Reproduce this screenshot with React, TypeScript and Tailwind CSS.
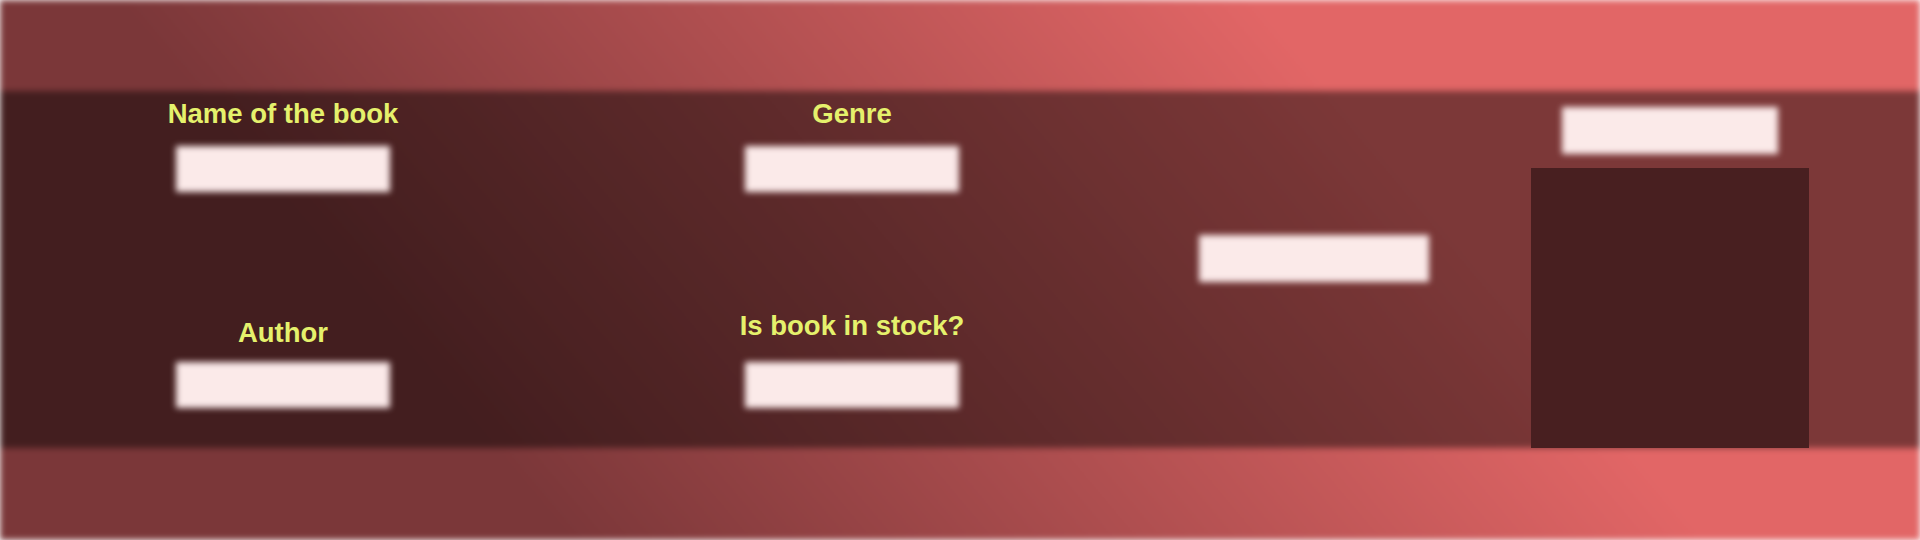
import React from "react";

const labelCls =
  "block text-[27.5px] leading-[32px] font-bold text-[#e5f16c] whitespace-nowrap text-center";
const inputCls = "block bg-[#fbeae9] blur-[3px] border-0 outline-none";

function Field({ label, top, inputTop }: { label: string; top: string; inputTop: string }) {
  return (
    <div className={`flex flex-col items-center ${top}`}>
      <label className={labelCls} style={{ fontFamily: '"Liberation Sans", Arial, sans-serif' }}>
        {label}
      </label>
      <input className={`${inputCls} w-[214px] h-[46px] ${inputTop}`} />
    </div>
  );
}

export default function App() {
  return (
    <div className="relative w-[1920px] h-[540px] overflow-hidden bg-white">
      {/* blurred backdrop */}
      <div className="absolute inset-0 blur-[3px] bg-[linear-gradient(50deg,#7b3739_24%,#e26666_72%)] flex flex-col">
        <div className="h-[91px]" />
        <div className="h-[357px] bg-black/45" />
        <div className="flex-1" />
      </div>

      {/* content */}
      <div className="relative flex flex-col h-full">
        <div className="h-[91px]" />
        <form className="h-[357px] flex">
          <div className="w-[260px] ml-[153px] flex flex-col">
            <Field label="Name of the book" top="mt-[7px]" inputTop="mt-[16px]" />
            <Field label="Author" top="mt-[125px]" inputTop="mt-[13px]" />
          </div>
          <div className="w-[260px] ml-[309px] flex flex-col">
            <Field label="Genre" top="mt-[7px]" inputTop="mt-[16px]" />
            <Field label="Is book in stock?" top="mt-[118px]" inputTop="mt-[20px]" />
          </div>
          <div className="w-[240px] ml-[212px] flex flex-col items-center">
            <input className={`${inputCls} w-[230px] h-[47px] mt-[144px]`} />
          </div>
          <div className="w-[278px] ml-[97px] flex flex-col items-center">
            <input className={`${inputCls} w-[216px] h-[47px] mt-[16px]`} />
            <div className="w-[278px] h-[281px] mt-[14px] bg-[#481f20]" />
          </div>
        </form>
        <div className="flex-1" />
      </div>
    </div>
  );
}
